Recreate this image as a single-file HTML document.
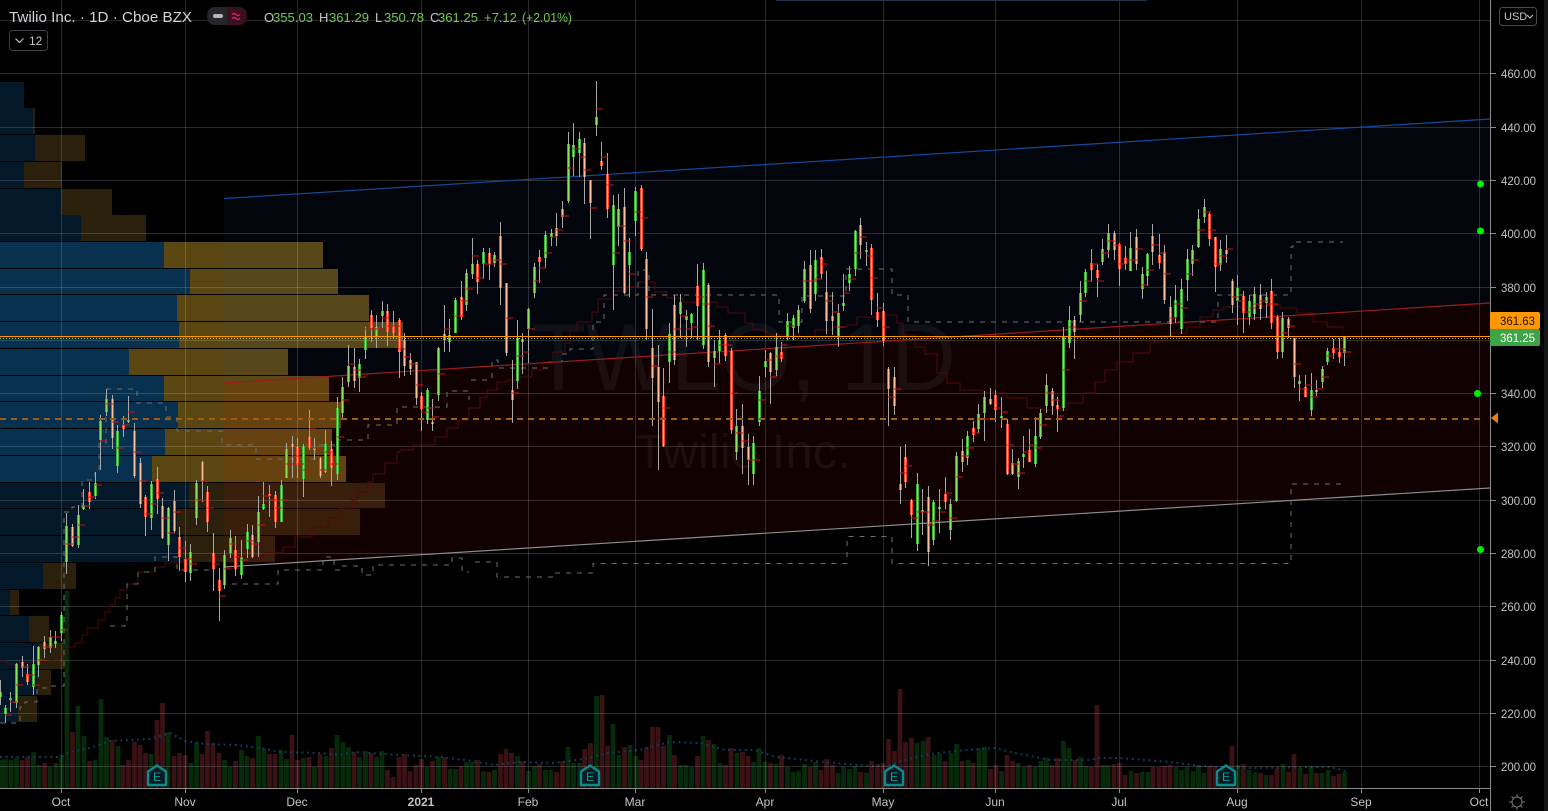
<!DOCTYPE html>
<html><head><meta charset="utf-8"><title>Twilio Inc. 1D</title>
<style>html,body{margin:0;padding:0;background:#000;overflow:hidden}svg{display:block;font-family:"Liberation Sans",sans-serif}</style></head>
<body>
<svg width="1548" height="811" viewBox="0 0 1548 811" xmlns="http://www.w3.org/2000/svg">
<defs>
<path id="gb" d="M0.5 692V697M5.5 708V714M10.5 698V700M16.5 664V703M33.5 664V687M38.5 647V665M50.5 637V648M55.5 641V644M61.5 615V633M66.5 526V562M78.5 515V545M83.5 505V509M95.5 483V496M100.5 421V440M106.5 399V412M117.5 431V466M128.5 420V422M151.5 484V518M168.5 508V545M190.5 552V573M196.5 483V518M224.5 555V585M230.5 538V553M241.5 557V575M247.5 532V549M258.5 512V542M263.5 504V509M281.5 485V522M286.5 449V478M303.5 446V479M314.5 448V450M325.5 444V472M337.5 408V474M342.5 387V413M348.5 366V382M359.5 364V378M365.5 337V350M376.5 327V337M382.5 311V316M427.5 390V420M438.5 348V395M449.5 335V342M455.5 300V333M466.5 273V305M472.5 264V274M483.5 252V264M494.5 255V263M517.5 338V381M528.5 309V329M534.5 267V293M545.5 235V258M551.5 233V237M568.5 144V201M573.5 145V157M579.5 139V153M596.5 117V125M613.5 205V265M618.5 209V227M629.5 252V265M635.5 191V221M669.5 334V362M680.5 302V314M686.5 316V320M691.5 314V323M703.5 270V345M714.5 351V358M719.5 340V351M736.5 426V452M753.5 443V474M759.5 391V422M765.5 361V367M776.5 347V370M787.5 321V337M793.5 318V328M798.5 310V326M804.5 269V301M815.5 260V294M838.5 313V337M843.5 303V306M849.5 274V283M855.5 231V269M866.5 250V252M917.5 484V544M922.5 510V512M933.5 502V540M939.5 507V509M950.5 504V530M956.5 456V501M967.5 436V458M978.5 414V429M984.5 397V413M1001.5 416V418M1018.5 461V477M1023.5 454V457M1035.5 436V464M1040.5 413V437M1046.5 385V406M1063.5 337V408M1069.5 320V343M1080.5 293V315M1085.5 272V293M1102.5 249V262M1108.5 233V250M1130.5 248V271M1142.5 274V289M1147.5 254V276M1175.5 300V317M1181.5 289V329M1187.5 259V280M1192.5 250V264M1198.5 219V247M1204.5 207V217M1220.5 249V265M1237.5 288V301M1249.5 301V317M1254.5 294V314M1266.5 297V303M1282.5 318V352M1299.5 381V384M1311.5 390V410M1322.5 369V382M1327.5 351V362M1344.5 337V353"/>
<path id="rb" d="M22.5 662V668M27.5 674V682M44.5 642V649M72.5 527V546M89.5 492V502M112.5 399V438M123.5 425V429M134.5 431V476M140.5 463V504M145.5 497V517M157.5 479V499M162.5 506V538M174.5 501V531M179.5 537V557M185.5 559V572M202.5 462V481M207.5 492V522M213.5 553V569M219.5 580V591M235.5 550V569M252.5 535V557M269.5 494V496M275.5 495V522M292.5 444V447M297.5 447V465M309.5 437V448M320.5 458V476M331.5 449V468M354.5 367V381M371.5 315V328M387.5 311V332M393.5 326V333M399.5 320V352M404.5 340V366M410.5 360V369M416.5 362V398M421.5 396V409M432.5 422V424M444.5 334V340M461.5 297V317M477.5 264V282M489.5 253V264M500.5 236V288M506.5 283V353M512.5 390V400M522.5 339V342M539.5 257V262M556.5 228V236M562.5 209V217M584.5 143V177M590.5 180V203M601.5 161V166M607.5 174V209M624.5 207V293M641.5 188V249M646.5 259V329M652.5 348V378M658.5 367V402M663.5 396V446M674.5 305V360M697.5 286V306M708.5 285V362M725.5 335V356M731.5 351V430M742.5 426V448M748.5 447V460M770.5 353V372M781.5 352V359M810.5 265V309M821.5 257V274M826.5 292V321M832.5 316V321M860.5 225V245M871.5 248V300M877.5 312V320M883.5 311V341M888.5 369V389M894.5 377V406M900.5 484V490M905.5 457V482M911.5 500V515M928.5 497V552M945.5 494V502M962.5 451V462M973.5 428V435M990.5 399V404M995.5 395V410M1007.5 424V474M1012.5 463V474M1029.5 450V462M1052.5 391V406M1057.5 405V409M1074.5 320V332M1091.5 263V270M1097.5 270V278M1114.5 233V250M1119.5 244V269M1125.5 258V264M1136.5 237V264M1152.5 236V252M1159.5 255V263M1164.5 252V300M1170.5 307V324M1209.5 214V239M1215.5 237V267M1226.5 250V254M1232.5 281V305M1243.5 296V313M1260.5 295V309M1271.5 291V323M1277.5 317V352M1288.5 319V328M1294.5 338V377M1305.5 387V397M1316.5 390V392M1333.5 348V353M1339.5 352V357"/>
</defs>
<rect width="1548" height="811" fill="#000"/>
<!-- volume profile -->
<g shape-rendering="crispEdges">
<g fill="#03192a">
<rect y="82" width="24" height="26"/><rect y="108" width="33" height="26"/><rect y="135" width="35" height="26"/><rect y="162" width="24" height="26"/><rect y="189" width="61" height="26"/><rect y="215" width="81" height="26"/>
<rect y="483" width="189" height="25"/><rect y="509" width="177" height="26"/><rect y="536" width="183" height="26"/><rect y="563" width="43" height="26"/><rect y="590" width="10" height="25"/><rect y="616" width="29" height="26"/><rect y="643" width="39" height="26"/><rect y="670" width="37" height="25"/><rect y="696" width="18" height="26"/>
</g>
<g fill="#2a200c">
<rect x="33" y="108" width="2" height="26"/><rect x="35" y="135" width="50" height="26"/><rect x="24" y="162" width="38" height="26"/><rect x="61" y="189" width="51" height="26"/><rect x="81" y="215" width="65" height="26"/>
<rect x="189" y="483" width="196" height="25"/><rect x="177" y="509" width="183" height="26"/><rect x="183" y="536" width="92" height="26"/><rect x="43" y="563" width="33" height="26"/><rect x="10" y="590" width="9" height="25"/><rect x="29" y="616" width="20" height="26"/><rect x="39" y="643" width="28" height="26"/><rect x="37" y="670" width="14" height="25"/><rect x="18" y="696" width="19" height="26"/>
</g>
<g fill="#07314f">
<rect y="242" width="164" height="26"/><rect y="269" width="190" height="25"/><rect y="295" width="177" height="26"/><rect y="322" width="179" height="26"/><rect y="349" width="129" height="26"/><rect y="376" width="164" height="25"/><rect y="402" width="178" height="26"/><rect y="429" width="165" height="26"/><rect y="456" width="152" height="26"/>
</g>
<g fill="#5a4610">
<rect x="164" y="242" width="159" height="26"/><rect x="190" y="269" width="148" height="25"/><rect x="177" y="295" width="192" height="26"/><rect x="179" y="322" width="224" height="26"/><rect x="129" y="349" width="159" height="26"/><rect x="164" y="376" width="165" height="25"/><rect x="178" y="402" width="163" height="26"/><rect x="165" y="429" width="167" height="26"/><rect x="152" y="456" width="194" height="26"/>
</g>
</g>
<!-- channel fills -->
<polygon points="224,198 1490,119 1490,303 224,383" fill="#1e63d0" opacity=".055"/>
<polygon points="224,383 1490,303 1490,488 224,567" fill="#ff1010" opacity=".07"/>
<!-- volume -->
<g fill="none" stroke-width="4.8">
<path stroke="#062a0a" d="M1 788V760M5.5 788V759M11 788V760M16.5 788V758M33.5 788V752M39 788V765M50 788V767M56 788V763M61.5 788V755M67 788V591M78 788V706M84 788V736M95 788V760M101 788V699M106.5 788V737M118 788V746M151 788V754M168 788V732M191 788V763M196.5 788V743M224.5 788V760M230 788V767M241.5 788V750M247 788V756M258.5 788V736M264 788V749M281 788V750M286.5 788V759M303.5 788V758M314.5 788V767M326 788V756M337 788V735M343 788V742M348.5 788V747M359.5 788V757M365.5 788V751M376.5 788V757M382 788V751M427 788V767M438.5 788V757M450 788V769M455.5 788V769M466.5 788V762M472 788V762M483.5 788V771M494.5 788V770M517.5 788V756M528.5 788V771M534.5 788V766M545.5 788V770M551 788V770M568 788V747M573.5 788V763M579.5 788V763M596.5 788V696M613 788V724M619 788V755M630 788V745M636 788V756M669.5 788V735M680.5 788V765M686 788V765M691.5 788V767M703 788V736M714 788V744M720 788V763M737 788V753M753.5 788V762M759 788V748M765 788V762M776 788V764M787.5 788V767M793 788V772M798.5 788V771M804.5 788V764M815.5 788V762M838 788V773M843.5 788V767M849.5 788V769M855 788V766M866.5 788V773M917 788V743M923 788V741M934 788V755M939.5 788V754M951 788V753M956.5 788V744M968 788V760M979 788V748M984.5 788V747M1001.5 788V771M1018 788V763M1024 788V767M1035 788V767M1041 788V761M1046.5 788V758M1063.5 788V741M1069 788V748M1080.5 788V757M1086 788V766M1103 788V765M1108 788V765M1131 788V771M1142 788V772M1148 788V772M1176 788V767M1181.5 788V770M1187 788V767M1193 788V771M1198.5 788V765M1204 788V773M1220.5 788V773M1226.5 788V768M1238 788V765M1249 788V770M1255 788V772M1266 788V775M1283 788V764M1300 788V768M1311 788V766M1322 788V773M1328 788V770M1344.5 788V772"/>
<path stroke="#3a1115" d="M22 788V760M27.5 788V757M44.5 788V763M72.5 788V732M89.5 788V761M112 788V740M123 788V765M128.5 788V760M134.5 788V742M140 788V745M145.5 788V753M157 788V720M162.5 788V703M174 788V756M179.5 788V753M185 788V755M202 788V754M207.5 788V731M213 788V743M219 788V753M235.5 788V761M252.5 788V758M269.5 788V754M275 788V754M292 788V735M297.5 788V760M309 788V757M320 788V754M331.5 788V748M354 788V752M371 788V753M387.5 788V770M393 788V777M399 788V757M404.5 788V754M410 788V771M416 788V765M421.5 788V759M432.5 788V761M444.5 788V757M461 788V766M477.5 788V760M489 788V772M500.5 788V754M506 788V749M511.5 788V753M522.5 788V761M539.5 788V764M556.5 788V772M562.5 788V761M584.5 788V749M590.5 788V743M602 788V695M607.5 788V746M624.5 788V747M641 788V760M646.5 788V747M652.5 788V727M658 788V727M663.5 788V746M674.5 788V755M697.5 788V756M708.5 788V740M725.5 788V765M731 788V748M742.5 788V752M748 788V756M770.5 788V763M781.5 788V755M810 788V767M821 788V770M826.5 788V759M832.5 788V765M860.5 788V772M871.5 788V761M877.5 788V764M883 788V763M888.5 788V739M894.5 788V751M900 788V689M905.5 788V742M911.5 788V738M928 788V737M945 788V761M962 788V761M973 788V763M990.5 788V769M996 788V765M1007 788V755M1012.5 788V761M1029.5 788V765M1052 788V765M1057.5 788V758M1075 788V760M1091.5 788V767M1097 788V705M1114 788V764M1119.5 788V763M1125 788V775M1136.5 788V773M1153 788V767M1159 788V767M1164.5 788V766M1170 788V765M1209.5 788V766M1215 788V766M1232 788V746M1243.5 788V764M1260.5 788V773M1271.5 788V775M1277 788V768M1288.5 788V772M1294 788V754M1305.5 788V774M1316.5 788V773M1333.5 788V776M1339 788V774"/>
</g>
<!-- volume MA -->
<polyline fill="none" stroke="#0f4064" stroke-width="2" stroke-dasharray="1.8 3.8" points="0,757 60,757 70,752 90,748 110,741 130,740 150,739 170,733 185,741 205,744 235,745 260,748 280,752 320,753 340,755 355,752 400,755 440,757 465,760 495,765 520,762 555,763 590,758 607,753 640,750 670,742 700,743 725,750 755,750 775,757 825,762 870,766 885,766 905,760 930,754 965,750 995,748 1010,752 1050,760 1090,760 1100,758 1120,758 1170,762 1200,766 1250,768 1330,767 1345,771"/>
<!-- grid -->
<g stroke="#fff" stroke-opacity=".16" shape-rendering="crispEdges">
<path d="M0 20.5H1490M0 73.5H1490M0 127.5H1490M0 180.5H1490M0 233.5H1490M0 287.5H1490M0 340.5H1490M0 393.5H1490M0 446.5H1490M0 500.5H1490M0 553.5H1490M0 606.5H1490M0 660.5H1490M0 713.5H1490M0 766.5H1490"/>
<path d="M61.5 0V788M185.5 0V788M297.5 0V788M421.5 0V788M528.5 0V788M635.5 0V788M765.5 0V788M883.5 0V788M995.5 0V788M1119.5 0V788M1237.5 0V788M1361.5 0V788M1479.5 0V788"/>
</g>
<!-- watermark -->
<g fill="#787b86" fill-opacity=".11">
<text x="531" y="390" font-size="96" textLength="425" lengthAdjust="spacingAndGlyphs">TWLO, 1D</text>
<text x="635" y="468" font-size="48" textLength="216" lengthAdjust="spacingAndGlyphs">Twilio Inc.</text>
</g>
<!-- MA stair -->
<path fill="none" stroke="#4f0a0a" d="M0 661H7V664H20V662H50V660H60V654H68V647H75V643H82V635H87V628H98V620H105V612H110V605H115V598H120V590H127V584H138V572H155V567H165V563H177V562H197V557H213V556H263V553H283V547H295V537H312V527H328V518H340V508H352V500H357V492H368V482H373V474H385V463H397V452H400V450H413V445H435V437H447V428H458V420H469V408H480V397H487V390H497V382H508V380H520V377H532V370H543V362H553V352H565V343H570V330H577V322H592V312H598V299H613V291H627V287H638V282H645V282H655V292H667V298H683V302H700V302H717V307H728V313H745V323H753V330H767V335H800V337H815V330H833V327H847V325H857V317H883V315H897V323H903V335H915V347H925V354H937V373H947V383H960V390H983V393H1007V398H1027V408H1042V410H1067V403H1083V393H1095V382H1105V370H1117V362H1133V353H1150V342H1162V336H1172V333H1187V327H1200V317H1213V310H1223V307H1250V306H1267V305H1280V308H1297V313H1313V322H1327V327H1343V329"/>
<!-- dashed step lines -->
<path fill="none" stroke="#6e6e6e" stroke-dasharray="5 6" d="M0 723H20V707H25V702H37V688H52V686H64V512H72V507H82V480H95V472H99V443H106V389H137V403H166V417H177V431H222V445H256V459H315V445H335V440H368V425H397V407H447V391H469V400M471 380H488M492 378V360H498V368H548V362H562V354H570V349H593V322H604V295H638V270H649V295H779V322H802V296H846V269H892V295H908V322H1218V295H1291V247H1293V242H1343"/>
<path fill="none" stroke="#6e6e6e" stroke-dasharray="5 6" d="M110 626H127V584H138V572H155V557H177V570H213M232 584H278V570H323V557H334V570H340V566H362V575H373V565H400H452V558H462V572H469M475 562H497V577H555V573H593V563.5H847V536.5H892V563.5H1291V484H1343"/>
<!-- trend lines -->
<line x1="224" y1="198.5" x2="1490" y2="119" stroke="#124b9c" stroke-width="1.2"/>
<line x1="224" y1="383" x2="1490" y2="303" stroke="#9c1c1c" stroke-width="1.2"/>
<line x1="224" y1="567" x2="1490" y2="488" stroke="#8a8a92" stroke-width="1.2"/>
<!-- candles -->
<g fill="none" shape-rendering="crispEdges">
<path stroke="#a8a8a8" d="M0.5 680V705M5.5 705V723M10.5 692V712M16.5 663V708M22.5 656V677M27.5 664V685M33.5 646V695M38.5 646V677M44.5 636V658M50.5 630V653M55.5 631V648M61.5 612V641M66.5 513V574M72.5 524V547M78.5 505V548M83.5 489V510M89.5 482V509M95.5 472V499M100.5 415V470M106.5 389V416M112.5 395V449M117.5 425V473M123.5 416V437M128.5 396V423M134.5 423V478M140.5 458V508M145.5 495V536M151.5 481V530M157.5 467V514M162.5 498V539M168.5 507V561M174.5 490V533M179.5 527V571M185.5 541V582M190.5 544V581M196.5 480V525M202.5 461V502M207.5 486V532M213.5 533V591M219.5 568V621M224.5 550V589M230.5 530V558M235.5 536V576M241.5 540V579M247.5 524V558M252.5 525V558M258.5 496V557M263.5 482V510M269.5 485V517M275.5 491V528M281.5 480V522M286.5 443V478M292.5 436V478M297.5 438V478M303.5 444V497M309.5 410V450M314.5 438V460M320.5 457V478M325.5 430V473M331.5 441V486M337.5 397V480M342.5 377V419M348.5 345V387M354.5 348V388M359.5 359V392M365.5 327V359M371.5 310V342M376.5 315V348M382.5 301V328M387.5 304V346M393.5 311V338M399.5 318V378M404.5 333V376M410.5 353V375M416.5 362V405M421.5 392V431M427.5 388V424M432.5 399V431M438.5 347V401M444.5 305V352M449.5 319V352M455.5 298V333M461.5 281V320M466.5 269V311M472.5 238V279M477.5 260V294M483.5 248V279M489.5 248V280M494.5 252V267M500.5 222V305M506.5 283V356M512.5 360V423M517.5 320V389M522.5 333V374M528.5 308V363M534.5 263V298M539.5 250V283M545.5 231V268M551.5 229V246M556.5 213V246M562.5 201V228M568.5 132V203M573.5 123V176M579.5 132V177M584.5 138V204M590.5 180V239M596.5 81V136M601.5 142V170M607.5 153V218M613.5 195V310M618.5 194V246M624.5 188V294M629.5 238V297M635.5 187V236M641.5 185V251M646.5 252V340M652.5 309V426M658.5 345V470M663.5 368V447M669.5 323V383M674.5 295V365M680.5 294V338M686.5 310V347M691.5 313V338M697.5 264V340M703.5 263V349M708.5 283V367M714.5 340V387M719.5 330V363M725.5 333V361M731.5 348V434M736.5 409V460M742.5 404V474M748.5 434V485M753.5 436V485M759.5 376V426M765.5 350V377M770.5 352V404M776.5 333V376M781.5 342V362M787.5 313V340M793.5 315V340M798.5 305V333M804.5 261V303M810.5 250V313M815.5 250V301M821.5 249V279M826.5 271V334M832.5 292V335M838.5 304V347M843.5 274V311M849.5 266V291M855.5 230V276M860.5 218V259M866.5 242V266M871.5 244V315M877.5 293V327M883.5 303V346M888.5 367V426M894.5 367V415M900.5 447V504M905.5 444V488M911.5 499V538M917.5 473V551M922.5 489V535M928.5 486V566M933.5 500V545M939.5 489V533M945.5 477V509M950.5 499V540M956.5 452V502M962.5 439V472M967.5 431V465M973.5 421V442M978.5 404V433M984.5 391V441M990.5 388V405M995.5 390V422M1001.5 397V428M1007.5 419V475M1012.5 449V475M1018.5 458V489M1023.5 436V468M1029.5 429V462M1035.5 417V467M1040.5 409V439M1046.5 374V413M1052.5 388V415M1057.5 397V432M1063.5 327V411M1069.5 306V348M1074.5 316V359M1080.5 281V322M1085.5 269V297M1091.5 249V282M1097.5 264V297M1102.5 239V265M1108.5 224V258M1114.5 231V260M1119.5 243V286M1125.5 246V270M1130.5 232V269M1136.5 229V270M1142.5 267V299M1147.5 253V286M1152.5 224V265M1159.5 234V269M1164.5 245V304M1170.5 296V337M1175.5 285V323M1181.5 279V334M1187.5 249V301M1192.5 245V276M1198.5 209V248M1204.5 199V223M1209.5 212V246M1215.5 237V292M1220.5 240V271M1226.5 235V263M1232.5 279V313M1237.5 275V325M1243.5 291V333M1249.5 295V325M1254.5 287V320M1260.5 284V320M1266.5 292V318M1271.5 279V329M1277.5 315V359M1282.5 312V358M1288.5 317V338M1294.5 338V388M1299.5 375V401M1305.5 375V397M1311.5 373V416M1316.5 380V396M1322.5 366V388M1327.5 348V365M1333.5 339V359M1339.5 338V363M1344.5 337V366"/>
<use href="#gb" stroke="#3bb033" stroke-width="3"/>
<use href="#gb" stroke="#84e654" stroke-width="1"/>
<use href="#rb" stroke="#f2452c" stroke-width="3"/>
<use href="#rb" stroke="#ffc09a" stroke-width="1"/>
<!-- ticks -->
<path stroke="#cc1212" d="M5 715h7M10 702h7M16 685h7M22 667h7M27 675h7M33 685h7M38 660h7M44 647h7M50 637h7M55 637h7M61 630h7M66 544h7M72 537h7M78 525h7M83 506h7M89 497h7M95 485h7M100 441h7M106 404h7M112 422h7M117 448h7M123 425h7M128 412h7M134 452h7M140 481h7M145 514h7M151 504h7M157 493h7M162 518h7M168 533h7M174 512h7M179 548h7M185 559h7M190 564h7M196 500h7M202 481h7M207 508h7M213 564h7M219 596h7M224 569h7M230 544h7M235 557h7M241 560h7M247 541h7M252 544h7M258 525h7M263 496h7M269 500h7M275 508h7M281 500h7M286 464h7M292 456h7M297 464h7M303 470h7M309 429h7M314 448h7M320 470h7M325 452h7M331 464h7M337 437h7M342 400h7M348 364h7M354 370h7M359 377h7M365 329h7M371 329h7M376 329h7M382 318h7M387 326h7M393 326h7M399 349h7M404 357h7M410 364h7M416 385h7M421 412h7M427 408h7M432 417h7M438 374h7M444 329h7M449 337h7M455 316h7M461 301h7M466 289h7M472 256h7M477 278h7M483 264h7M489 264h7M494 260h7M500 264h7M506 318h7M512 393h7M517 356h7M522 352h7M528 329h7M534 281h7M539 268h7M545 253h7M551 237h7M556 230h7M562 216h7M568 168h7M573 149h7M579 157h7M584 170h7M590 208h7M596 109h7M601 157h7M607 185h7M613 253h7M618 226h7M624 241h7M629 274h7M635 212h7M641 218h7M646 297h7M652 366h7M658 418h7M663 408h7M669 352h7M674 329h7M680 316h7M686 329h7M691 327h7M697 297h7M703 304h7M708 326h7M714 364h7M719 345h7M725 345h7M731 393h7M736 433h7M742 441h7M748 460h7M753 460h7M759 400h7M765 360h7M770 377h7M776 356h7M781 345h7M787 326h7M804 281h7M810 281h7M815 279h7M821 264h7M826 301h7M832 312h7M838 327h7M843 293h7M849 279h7M855 253h7M860 237h7M866 256h7M871 278h7M877 308h7M883 327h7M888 397h7M894 389h7M900 473h7M905 466h7M911 518h7M917 512h7M922 512h7M928 525h7M933 521h7M939 512h7M945 493h7M950 518h7M956 477h7M962 456h7M967 448h7M973 433h7M978 419h7M984 419h7M995 408h7M1001 412h7M1007 445h7M1012 464h7M1018 473h7M1023 452h7M1029 445h7M1035 448h7M1040 425h7M1046 393h7M1052 400h7M1057 416h7M1063 370h7M1069 327h7M1074 337h7M1080 301h7M1085 281h7M1091 264h7M1097 281h7M1102 253h7M1108 241h7M1114 245h7M1119 264h7M1125 260h7M1130 260h7M1136 249h7M1142 285h7M1147 270h7M1152 245h7M1159 253h7M1164 274h7M1170 318h7M1175 304h7M1181 308h7M1187 274h7M1192 260h7M1198 230h7M1204 212h7M1209 230h7M1215 264h7M1220 256h7M1226 249h7M1232 297h7M1237 301h7M1243 312h7M1249 308h7M1254 304h7M1260 301h7M1266 304h7M1271 304h7M1277 337h7M1282 333h7M1288 326h7M1294 364h7M1299 389h7M1305 385h7M1311 397h7M1316 389h7M1322 377h7M1327 356h7M1333 349h7M1339 349h7M1344 352h7"/>
</g>
<!-- orange lines -->
<g shape-rendering="crispEdges">
<line x1="0" y1="336.5" x2="1490" y2="336.5" stroke="#ff9800"/>
<line x1="0" y1="338.5" x2="1490" y2="338.5" stroke="#9fc050" stroke-dasharray="1 2"/>
<line x1="0" y1="419" x2="1480" y2="419" stroke="#a05c10" stroke-width="2" stroke-dasharray="6 5"/>
</g>
<!-- E badges -->
<g fill="#0b1a22" stroke="#0b8c8c" stroke-width="2.4" stroke-linejoin="round">
<path d="M148 771.5L157 765.5L166 771.5V785H148Z"/><path d="M581 771.5L590 765.5L599 771.5V785H581Z"/><path d="M885 771.5L894 765.5L903 771.5V785H885Z"/><path d="M1217 771.5L1226 765.5L1235 771.5V785H1217Z"/>
</g>
<g fill="#0f9a9a" font-size="12" text-anchor="middle"><text x="157" y="781">E</text><text x="590" y="781">E</text><text x="894" y="781">E</text><text x="1226" y="781">E</text></g>
<!-- green dots -->
<g fill="#00f000"><circle cx="1480.5" cy="184" r="3.5"/><circle cx="1480.5" cy="231" r="3.5"/><circle cx="1477.5" cy="393.5" r="3.5"/><circle cx="1480.5" cy="549.5" r="3.5"/></g>
<!-- axes -->
<rect x="1490" y="0" width="58" height="811" fill="#000"/>
<rect x="1544" y="0" width="4" height="811" fill="#141414"/>
<rect x="0" y="788" width="1490" height="23" fill="#000"/>
<path d="M1490.5 0V811M0 788.5H1490" stroke="#8c8c8c" shape-rendering="crispEdges"/>
<path d="M61.5 789v4M185.5 789v4M297.5 789v4M421.5 789v4M528.5 789v4M635.5 789v4M765.5 789v4M883.5 789v4M995.5 789v4M1119.5 789v4M1237.5 789v4M1361.5 789v4M1479.5 789v4M1491 73.5h5M1491 127.5h5M1491 180.5h5M1491 233.5h5M1491 287.5h5M1491 393.5h5M1491 446.5h5M1491 500.5h5M1491 553.5h5M1491 606.5h5M1491 660.5h5M1491 713.5h5M1491 766.5h5" stroke="#8c8c8c" shape-rendering="crispEdges"/>
<g fill="#c4c4c4" font-size="12">
<text x="1501" y="78" textLength="35" lengthAdjust="spacingAndGlyphs">460.00</text><text x="1501" y="132" textLength="35" lengthAdjust="spacingAndGlyphs">440.00</text><text x="1501" y="185" textLength="35" lengthAdjust="spacingAndGlyphs">420.00</text><text x="1501" y="238" textLength="35" lengthAdjust="spacingAndGlyphs">400.00</text><text x="1501" y="292" textLength="35" lengthAdjust="spacingAndGlyphs">380.00</text><text x="1501" y="398" textLength="35" lengthAdjust="spacingAndGlyphs">340.00</text><text x="1501" y="451" textLength="35" lengthAdjust="spacingAndGlyphs">320.00</text><text x="1501" y="505" textLength="35" lengthAdjust="spacingAndGlyphs">300.00</text><text x="1501" y="558" textLength="35" lengthAdjust="spacingAndGlyphs">280.00</text><text x="1501" y="611" textLength="35" lengthAdjust="spacingAndGlyphs">260.00</text><text x="1501" y="665" textLength="35" lengthAdjust="spacingAndGlyphs">240.00</text><text x="1501" y="718" textLength="35" lengthAdjust="spacingAndGlyphs">220.00</text><text x="1501" y="771" textLength="35" lengthAdjust="spacingAndGlyphs">200.00</text>
</g>
<g fill="#c4c4c4" font-size="12" text-anchor="middle">
<text x="61" y="806">Oct</text><text x="185" y="806">Nov</text><text x="297" y="806">Dec</text><text x="421" y="806" font-weight="bold">2021</text><text x="528" y="806">Feb</text><text x="635" y="806">Mar</text><text x="765" y="806">Apr</text><text x="883" y="806">May</text><text x="995" y="806">Jun</text><text x="1119" y="806">Jul</text><text x="1237" y="806">Aug</text><text x="1361" y="806">Sep</text><text x="1479" y="806">Oct</text>
</g>
<!-- price labels -->
<rect x="1490" y="312" width="50" height="17" rx="2" fill="#ff9800"/>
<rect x="1490" y="329" width="50" height="17" rx="2" fill="#3fa447"/>
<text x="1500" y="325" font-size="12" fill="#1a1208" textLength="35" lengthAdjust="spacingAndGlyphs">361.63</text>
<text x="1500" y="342" font-size="12" fill="#fff" textLength="35" lengthAdjust="spacingAndGlyphs">361.25</text>
<path d="M1491 418L1498 412.5V423.5Z" fill="#e8820c"/>
<!-- USD -->
<rect x="1499.5" y="7.5" width="37" height="18" rx="3" fill="#000" stroke="#4a4a4a"/>
<text x="1504" y="20" font-size="11" fill="#c4c4c4">USD</text>
<path d="M1527 15l3 3 3-3" fill="none" stroke="#c4c4c4"/>
<!-- settings -->
<g fill="none" stroke="#777">
<circle cx="1517" cy="802" r="5"/>
<path d="M1517 794v3M1517 807v3M1509 802h3M1522 802h3M1511.5 796.5l2 2M1520.5 805.5l2 2M1511.5 807.5l2-2M1520.5 798.5l2-2"/>
</g>
<!-- top accent -->
<line x1="776" y1="0.5" x2="1147" y2="0.5" stroke="#26324a"/>
<!-- header -->
<text x="9" y="22" font-size="15" fill="#d1d4dc" textLength="183" lengthAdjust="spacingAndGlyphs">Twilio Inc. · 1D · Cboe BZX</text>
<path d="M214 7H227V25H214A7 9 0 0 1 207 16A7 9 0 0 1 214 7Z" fill="#25262c"/>
<path d="M227 7H240A7 9 0 0 1 247 16A7 9 0 0 1 240 25H227Z" fill="#3a0f1f"/>
<rect x="213" y="14" width="10" height="4" rx="2" fill="#b4b6bc"/>
<path d="M232 14.5q2-2 4 0t4 0M232 18.5q2-2 4 0t4 0" fill="none" stroke="#e01e5a" stroke-width="1.4"/>
<g font-size="13" fill="#c4c4c4"><text x="264" y="22">O</text><text x="319" y="22">H</text><text x="375" y="22">L</text><text x="430" y="22">C</text></g>
<g font-size="13" fill="#6ecb4e"><text x="273" y="22" textLength="40" lengthAdjust="spacingAndGlyphs">355.03</text><text x="329" y="22" textLength="40" lengthAdjust="spacingAndGlyphs">361.29</text><text x="384" y="22" textLength="40" lengthAdjust="spacingAndGlyphs">350.78</text><text x="438" y="22" textLength="40" lengthAdjust="spacingAndGlyphs">361.25</text><text x="484" y="22">+7.12</text><text x="522" y="22" textLength="50" lengthAdjust="spacingAndGlyphs">(+2.01%)</text></g>
<rect x="9.5" y="30.5" width="38" height="20" rx="3" fill="#000" stroke="#3c3f46"/>
<path d="M15.5 38.5l4 4 4-4" fill="none" stroke="#c4c4c4" stroke-width="1.2"/>
<text x="29" y="45" font-size="12" fill="#c4c4c4">12</text>
</svg>
</body></html>
